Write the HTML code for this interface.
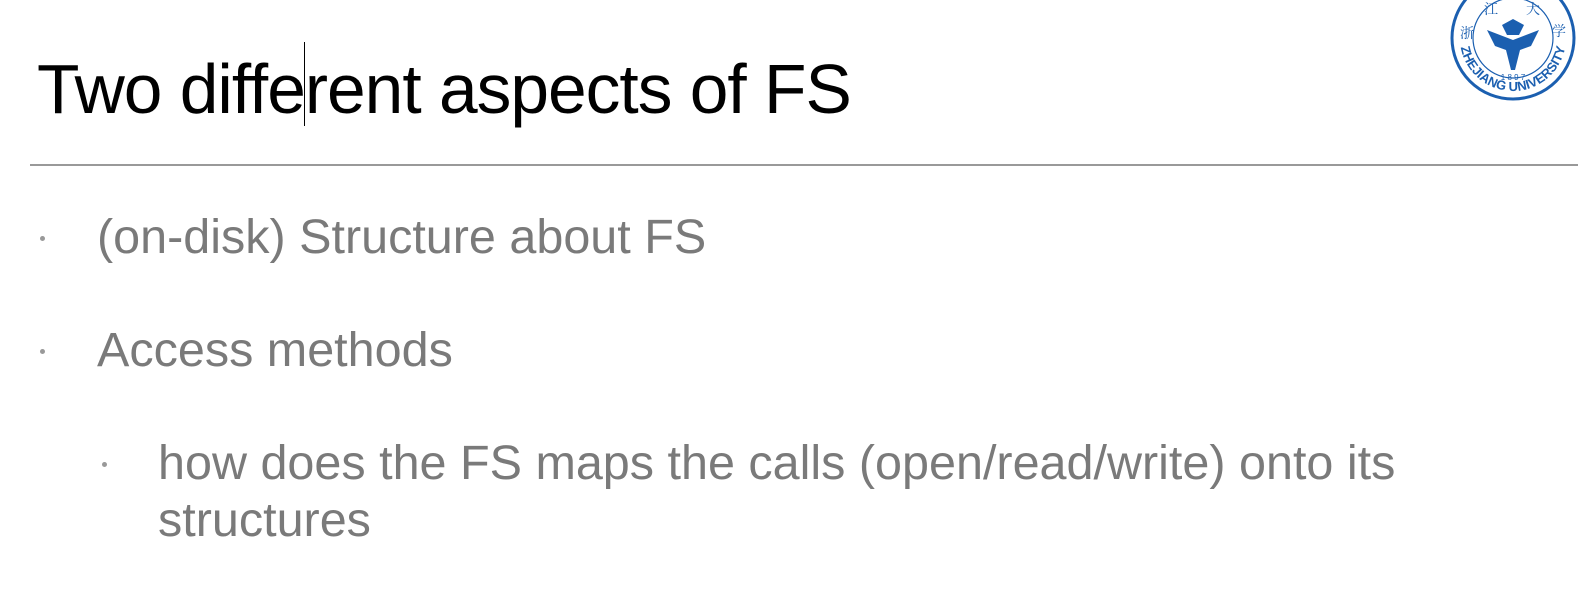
<!DOCTYPE html>
<html><head><style>
body{margin:0;width:1578px;height:606px;background:#fff;position:relative;overflow:hidden;font-family:"Liberation Sans",sans-serif;}
.t{position:absolute;left:37px;top:41px;font-size:69.5px;color:#000;white-space:nowrap;letter-spacing:-1px;line-height:96px;}
.hr{position:absolute;left:30px;top:164px;width:1548px;height:2px;background:#999;}
.b{position:absolute;color:#7a7a7a;font-size:48.5px;white-space:nowrap;line-height:57px;}
.d{position:absolute;width:5px;height:5px;border-radius:50%;background:#999;}
</style></head><body>
<div class="t">Two different aspects of FS</div>
<div style="position:absolute;left:304px;top:42px;width:1px;height:84px;background:#000"></div>
<div class="hr"></div>
<div class="d" style="left:40px;top:236px"></div>
<div class="b" style="left:97px;top:209px">(on-disk) Structure about FS</div>
<div class="d" style="left:40px;top:349px"></div>
<div class="b" style="left:97px;top:322px">Access methods</div>
<div class="d" style="left:102px;top:462px"></div>
<div class="b" style="left:158px;top:435px">how does the FS maps the calls (open/read/write) onto its<br>structures</div>
<svg style="position:absolute;left:1440px;top:0" width="138" height="110">
<defs><path id="arc" d="M20 38 A53 53 0 0 0 126 38"/></defs>
<circle cx="73" cy="38" r="61" fill="none" stroke="#1b5fb0" stroke-width="3"/>
<circle cx="73" cy="38" r="40" fill="none" stroke="#1b5fb0" stroke-width="1.2"/>
<path d="M47 30 L73 40 L99 30 L91 46 L80 50 L75 70 L71 70 L66 50 L55 46 Z M62 25 L73 19 L84 25 L79 35 L67 35 Z" fill="#1b5fb0"/>
<text x="73" y="80" font-size="8" fill="#1b5fb0" text-anchor="middle" font-family="Liberation Sans">1 8 9 7</text>
<text font-size="13" fill="#1b5fb0" font-family="Liberation Sans" font-weight="bold"><textPath href="#arc" startOffset="50%" text-anchor="middle">ZHEJIANG UNIVERSITY</textPath></text>
<text x="20" y="38" font-size="14" fill="#1b5fb0" font-family="Noto Serif CJK SC,serif">浙</text>
<text x="44" y="14" font-size="14" fill="#1b5fb0" font-family="Noto Serif CJK SC,serif">江</text>
<text x="86" y="14" font-size="14" fill="#1b5fb0" font-family="Noto Serif CJK SC,serif">大</text>
<text x="112" y="36" font-size="14" fill="#1b5fb0" font-family="Noto Serif CJK SC,serif">学</text>
</svg>
</body></html>
